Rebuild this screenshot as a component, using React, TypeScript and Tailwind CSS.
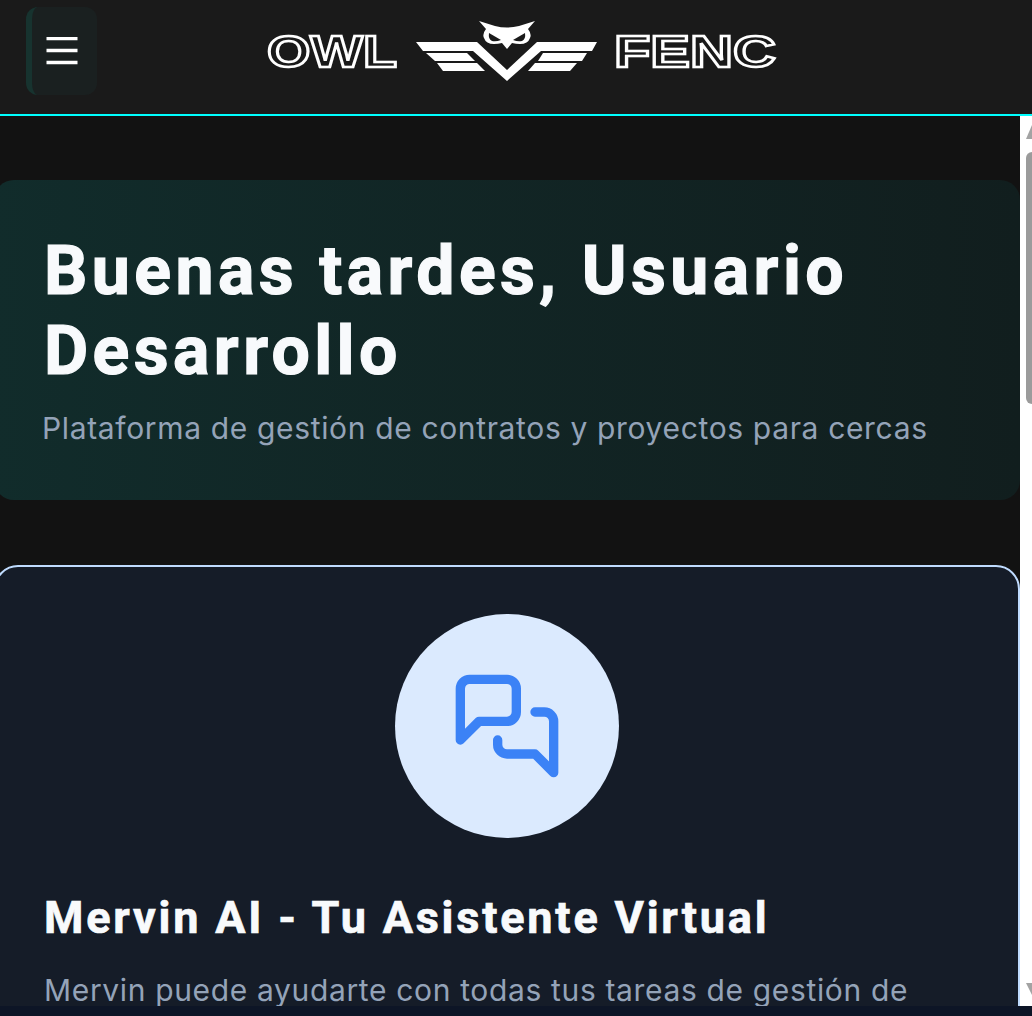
import React from "react";

const OutlineWord = ({ text, width }: { text: string; width: number }) => (
  <svg width={width} height="44" viewBox={`0 0 ${width} 44`} className="overflow-visible">
    <text
      x="2"
      y="38"
      textLength={width - 4}
      lengthAdjust="spacingAndGlyphs"
      fontFamily="'Liberation Sans', sans-serif"
      fontWeight="700"
      fontSize="45"
      fill="#1a1a1a"
      stroke="#ffffff"
      strokeWidth="2.5"
    >
      {text}
    </text>
  </svg>
);

const OwlMark = () => (
  <svg width="182" height="62" viewBox="416 20 182 62">
    <g fill="#ffffff">
      <polygon points="416,42 477,42 507,70 537,42 597,42 592,51 541,51 507,81 473,51 423,51" />
      <polygon points="426,53 467,53 475,61 435,61" />
      <polygon points="437,63 477,63 485,71 443,71" />
      <polygon points="543,53 587,53 582,61 538,61" />
      <polygon points="535,63 577,63 570,71 528,71" />
      <path d="M479 21 L495 26 Q507 29 519 26 L535 21 L528 29 Q532 34 530 38 Q528 44 520 44 Q516 44 512 43 L507 49 L502 43 Q498 44 494 44 Q486 44 484 38 Q482 34 486 29 Z" />
    </g>
    <path d="M489 33 L501 40 Q496 42 492 41 Q488 39 489 33 Z" fill="#1a1a1a" />
    <path d="M525 33 L513 40 Q518 42 522 41 Q526 39 525 33 Z" fill="#1a1a1a" />
  </svg>
);

const App = () => {
  return (
    <div className="h-[1016px] w-[1032px] overflow-hidden flex flex-col bg-[#121212] font-['Inter',sans-serif]">
      {/* Header */}
      <header className="h-[116px] shrink-0 flex bg-[#1a1a1a] border-b-2 border-[#00ffff] pt-[7px] pl-[26px]">
        <button className="w-[71px] h-[88px] rounded-xl border-l-[6px] border-[#17332f] bg-[#1a2020] flex items-center justify-center">
          <svg width="32" height="28" viewBox="0 0 32 28" className="-ml-[6px]">
            <path d="M0.5 1.5H31.5M0.5 13.5H31.5M0.5 25.5H31.5" stroke="#ffffff" strokeWidth="3.5" />
          </svg>
        </button>
        <div className="ml-[168px] h-[62px] mt-[13px] flex items-center">
          <OutlineWord text="OWL" width={134} />
          <div className="ml-[17px]">
            <OwlMark />
          </div>
          <div className="ml-[14px]">
            <OutlineWord text="FENC" width={166} />
          </div>
        </div>
      </header>

      <div className="flex-1 flex min-h-0">
        {/* Content */}
        <main className="w-[1020px] shrink-0 overflow-hidden">
          <div className="-ml-[6px] w-[1026px] pt-16">
            <section className="h-[320px] rounded-[20px] bg-gradient-to-r from-[#112c2b] to-[#111e1e] pl-[48px] pt-[51px]">
              <h1 className="font-['Roboto',sans-serif] font-bold text-[68px] leading-[80px] tracking-[4.4px] [-webkit-text-stroke:1.2px_#f8fafc] text-[#f8fafc] pl-[2px]">
                Buenas tardes, Usuario
                <br />
                Desarrollo
              </h1>
              <p className="mt-[15px] text-[30px] leading-[45px] tracking-[0.65px] text-[#94a3b8]">
                Plataforma de gestión de contratos y proyectos para cercas
              </p>
            </section>

            <section className="mt-[65px] h-[600px] rounded-[24px] border-2 border-[#bfdbfe] bg-[#151c28] pt-[47px] pl-[48px] pr-[49px]">
              <div className="flex justify-center">
                <div className="w-[224px] h-[224px] rounded-full bg-[#dbeafe] flex items-center justify-center">
                  <svg
                    width="112"
                    height="112"
                    viewBox="0 0 24 24"
                    fill="none"
                    stroke="#3b82f6"
                    strokeWidth="2"
                    strokeLinecap="round"
                    strokeLinejoin="round"
                  >
                    <path d="M14 9a2 2 0 0 1-2 2H6l-4 4V4c0-1.1.9-2 2-2h8a2 2 0 0 1 2 2z" />
                    <path d="M18 9h2a2 2 0 0 1 2 2v11l-4-4h-6a2 2 0 0 1-2-2v-1" />
                  </svg>
                </div>
              </div>
              <h2 className="mt-[50px] font-['Roboto',sans-serif] font-bold text-[45px] leading-[60px] tracking-[2.8px] [-webkit-text-stroke:0.7px_#f8fafc] text-[#f8fafc]">
                Mervin AI - Tu Asistente Virtual
              </h2>
              <p className="mt-[20px] text-[30px] leading-[45px] tracking-[0.65px] text-[#94a3b8] whitespace-nowrap">
                Mervin puede ayudarte con todas tus tareas de gestión de
              </p>
            </section>
          </div>
        </main>

        {/* Scrollbar */}
        <div className="w-3 shrink-0 bg-white flex flex-col items-end">
          <div className="mt-[9px] w-0 h-0 border-l-[6px] border-r-0 border-b-[14px] border-l-transparent border-b-[#a3a3a3]" />
          <div className="mt-[13px] w-[6px] h-[252px] rounded-tl-[6px] rounded-bl-[6px] bg-[#9b9b9b]" />
          <div className="mt-auto mb-[11px] w-0 h-0 border-l-[6px] border-t-[12px] border-l-transparent border-t-[#a3a3a3]" />
        </div>
      </div>

      {/* Bottom strip */}
      <div className="h-[10px] shrink-0 bg-[#0d1526]" />
    </div>
  );
};

export default App;
